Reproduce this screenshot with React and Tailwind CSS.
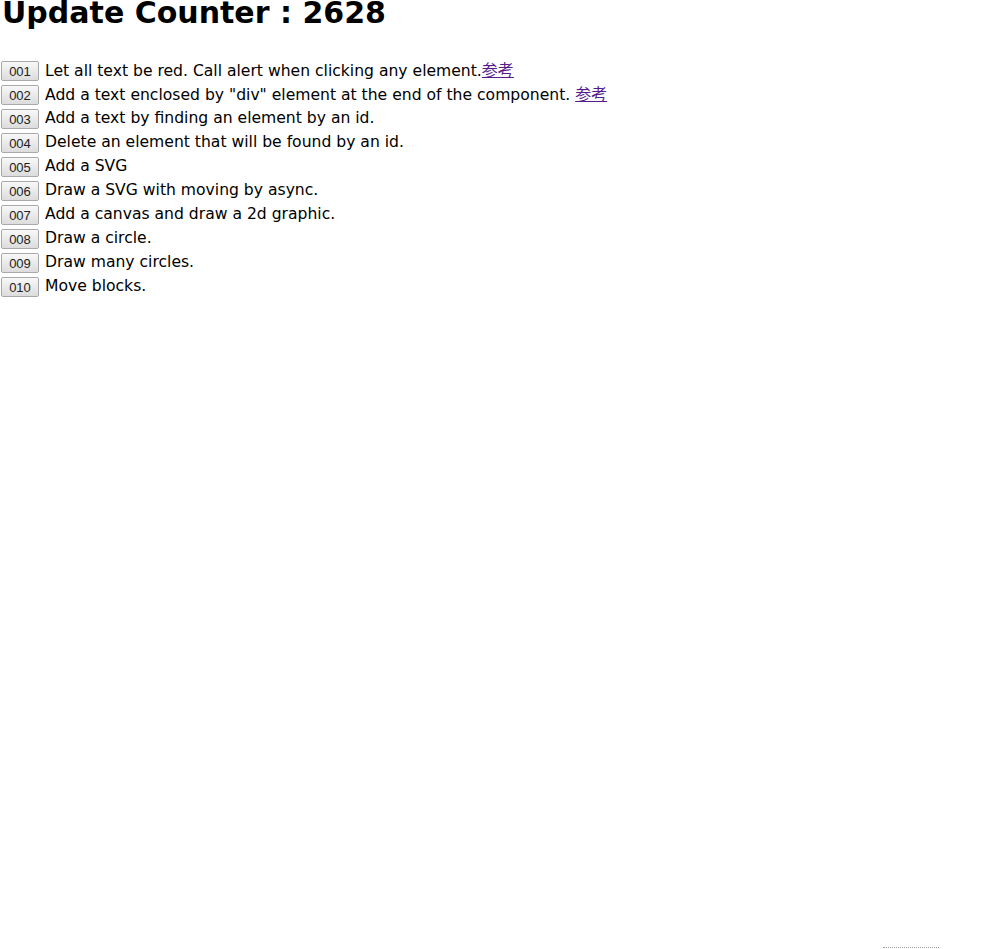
const items = [
  { id: '001', text: 'Let all text be red. Call alert when clicking any element.', link: true, space: false },
  { id: '002', text: 'Add a text enclosed by "div" element at the end of the component.', link: true, space: true },
  { id: '003', text: 'Add a text by finding an element by an id.' },
  { id: '004', text: 'Delete an element that will be found by an id.' },
  { id: '005', text: 'Add a SVG' },
  { id: '006', text: 'Draw a SVG with moving by async.' },
  { id: '007', text: 'Add a canvas and draw a 2d graphic.' },
  { id: '008', text: 'Draw a circle.' },
  { id: '009', text: 'Draw many circles.' },
  { id: '010', text: 'Move blocks.' }
];

function Row({ item }) {
  return (
    <div className="flex items-center h-6">
      <button className="ml-px w-[38px] h-[20px] mr-[6px] border border-[#a9a9a9] rounded-[2px] bg-gradient-to-b from-[#f8f8f8] to-[#dcdcdc] text-[13px] leading-none text-[#222] font-['Liberation_Sans',sans-serif] flex items-center justify-center">
        {item.id}
      </button>
      <span className="whitespace-pre">
        {item.text}
        {item.space ? ' ' : ''}
        {item.link && (
          <a href="#" className="text-[#551a8b] underline text-[16px]">
            参考
          </a>
        )}
      </span>
    </div>
  );
}

export default function App() {
  return (
    <div className="min-h-screen flex flex-col bg-white text-black font-['DejaVu_Sans','Noto_Sans_CJK_JP',sans-serif] text-[15.6px]">
      <h1 className="text-[30px] font-bold leading-none mt-[-2px] ml-[2px]">
        Update Counter : 2628
      </h1>
      <div className="mt-[31px] flex flex-col">
        {items.map((it) => (
          <Row key={it.id} item={it} />
        ))}
      </div>
      <div className="mt-auto flex justify-end pr-[47px]">
        <div className="w-[56px] border-t border-dotted border-[#999] mb-[1px]" />
      </div>
    </div>
  );
}
